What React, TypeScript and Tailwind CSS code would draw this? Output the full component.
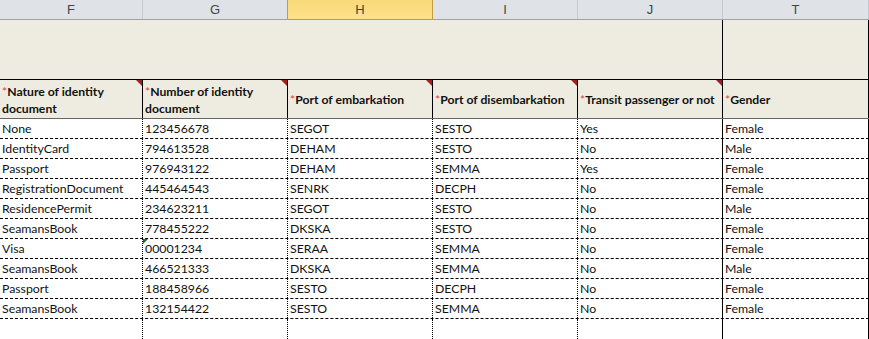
const cols = [
  { letter: 'F', w: 'w-[143px]' },
  { letter: 'G', w: 'w-[145px]' },
  { letter: 'H', w: 'w-[145px]' },
  { letter: 'I', w: 'w-[145px]' },
  { letter: 'J', w: 'w-[145px]' },
  { letter: 'T', w: 'w-[146px]' },
];

const headers = [
  ['Nature of identity', 'document'],
  ['Number of identity', 'document'],
  ['Port of embarkation'],
  ['Port of disembarkation'],
  ['Transit passenger or not'],
  ['Gender'],
];

const rows = [
  ['None', '123456678', 'SEGOT', 'SESTO', 'Yes', 'Female'],
  ['IdentityCard', '794613528', 'DEHAM', 'SESTO', 'No', 'Male'],
  ['Passport', '976943122', 'DEHAM', 'SEMMA', 'Yes', 'Female'],
  ['RegistrationDocument', '445464543', 'SENRK', 'DECPH', 'No', 'Female'],
  ['ResidencePermit', '234623211', 'SEGOT', 'SESTO', 'No', 'Male'],
  ['SeamansBook', '778455222', 'DKSKA', 'SESTO', 'No', 'Female'],
  ['Visa', '00001234', 'SERAA', 'SEMMA', 'No', 'Female'],
  ['SeamansBook', '466521333', 'DKSKA', 'SEMMA', 'No', 'Male'],
  ['Passport', '188458966', 'SESTO', 'DECPH', 'No', 'Female'],
  ['SeamansBook', '132154422', 'SESTO', 'SEMMA', 'No', 'Female'],
];

function cellBorder(i: number) {
  // J|T boundary and right edge are solid, others dotted
  if (i === 4 || i === 5) return 'border-r border-solid border-black';
  return 'border-r border-dotted border-black';
}

export default function App() {
  return (
    <div className="w-[869px] h-[339px] overflow-hidden bg-white text-[12.3px] text-[#111] font-['Lato','Liberation_Sans',sans-serif]">
      {/* column letters */}
      <div className="flex h-[20px] bg-[#dfe3e8] border-b border-[#9ea3a9] text-[13px] font-['Liberation_Sans',sans-serif]">
        {cols.map((c, i) =>
          c.letter === 'H' ? (
            <div
              key={c.letter}
              className={`${c.w} shrink-0 flex items-center justify-center bg-gradient-to-b from-[#f9d978] to-[#fde28c] border-r border-[#c49a3f] border-b border-b-[#c49a3f] -mb-px text-[#444]`}
            >
              {c.letter}
            </div>
          ) : (
            <div
              key={c.letter}
              className={`${c.w} shrink-0 flex items-center justify-center border-r ${i === 1 ? 'border-[#c49a3f]' : 'border-[#c5c9cf]'} text-[#444]`}
            >
              {c.letter}
            </div>
          )
        )}
      </div>

      {/* blank tall row */}
      <div className="flex h-[59px] bg-[#eeece1]">
        {cols.map((c, i) => (
          <div key={c.letter} className={`${c.w} shrink-0 ${i >= 4 ? 'border-r border-black' : ''}`} />
        ))}
      </div>

      {/* header row */}
      <div className="flex h-[40px] bg-[#eeece1] border-t border-black border-b border-b-[#666]">
        {headers.map((h, i) => (
          <div
            key={i}
            className={`${cols[i].w} shrink-0 relative border-r border-black px-[2px] pt-px flex flex-col justify-center font-bold text-[12.2px] leading-[17px]`}
          >
            {h.map((line, j) => (
              <div key={j} className="whitespace-nowrap">
                {j === 0 && <span className="text-[#e04040] font-normal">*</span>}
                {line}
              </div>
            ))}
            {i < 5 && (
              <div className="absolute top-0 right-0 w-0 h-0 border-t-[6px] border-t-[#a11f1f] border-l-[6px] border-l-transparent" />
            )}
          </div>
        ))}
      </div>

      {/* data rows */}
      {rows.map((r, ri) => (
        <div key={ri} className="flex h-[20px] border-b border-dashed border-black">
          {r.map((v, ci) => (
            <div
              key={ci}
              className={`${cols[ci].w} shrink-0 relative flex items-center px-[2px] pt-px ${cellBorder(ci)}`}
            >
              {v}
              {ri === 6 && ci === 1 && (
                <div className="absolute top-0 left-0 w-0 h-0 border-t-[5px] border-t-[#207020] border-r-[5px] border-r-transparent" />
              )}
            </div>
          ))}
        </div>
      ))}

      {/* empty row */}
      <div className="flex h-[20px]">
        {cols.map((c, i) => (
          <div key={c.letter} className={`${c.w} shrink-0 ${cellBorder(i)}`} />
        ))}
      </div>
    </div>
  );
}
